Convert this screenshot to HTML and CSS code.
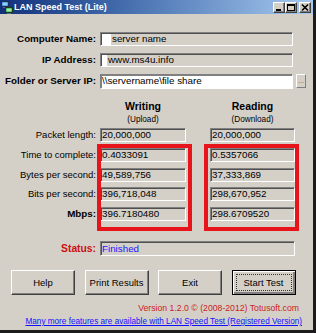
FILE: index.html
```html
<!DOCTYPE html>
<html>
<head>
<meta charset="utf-8">
<title>LAN Speed Test (Lite)</title>
<link rel="stylesheet" href="styles.css">
</head>
<body>
<div class="window">
  <div class="titlebar">
    <svg class="app-icon" width="12" height="13" viewBox="0 0 12 13">
      <rect x="0.5" y="0.5" width="7" height="5" fill="#3a78c8" stroke="#1b2f5a"/>
      <rect x="1.5" y="1.5" width="5" height="3" fill="#8fd0ff"/>
      <rect x="2" y="6" width="4" height="1" fill="#5a6a80"/>
      <rect x="4.5" y="6.5" width="7" height="5" fill="#2f9a4a" stroke="#1b3a22"/>
      <rect x="5.5" y="7.5" width="5" height="3" fill="#9ef0a8"/>
      <rect x="6" y="12" width="4" height="1" fill="#5a6a80"/>
    </svg>
    <span class="title">LAN Speed Test (Lite)</span>
    <div class="tb-buttons">
      <span class="tb-btn"><svg width="10" height="9" viewBox="0 0 10 9"><rect x="2" y="6" width="5" height="2" fill="#000"/></svg></span>
      <span class="tb-btn"><svg width="10" height="9" viewBox="0 0 10 9"><rect x="1.5" y="1.5" width="7" height="6" fill="none" stroke="#000"/><rect x="1" y="1" width="8" height="2" fill="#000"/></svg></span>
      <span class="tb-btn close-btn"><svg width="10" height="9" viewBox="0 0 10 9"><path d="M2 1.5 L8 7.5 M8 1.5 L2 7.5" stroke="#000" stroke-width="1.6"/></svg></span>
    </div>
  </div>

  <div class="main">
    <div class="fields">
      <div class="row">
        <span class="lbl bold">Computer Name:</span>
        <div class="box wide"><span class="hl w8"></span>server name</div>
      </div>
      <div class="row">
        <span class="lbl bold">IP Address:</span>
        <div class="box wide"><span class="hl w5"></span>www.ms4u.info</div>
      </div>
      <div class="row">
        <span class="lbl bold">Folder or Server IP:</span>
        <div class="box wide white">\\servername\file share</div>
        <span class="browse">...</span>
      </div>
    </div>

    <div class="heads">
      <div class="head"><span class="h-main">Writing</span><span class="h-sub">(Upload)</span></div>
      <div class="head right"><span class="h-main">Reading</span><span class="h-sub">(Download)</span></div>
    </div>

    <div class="results">
      <div class="row">
        <span class="lbl">Packet length:</span>
        <div class="box col-w">20,000,000</div>
        <div class="box col-r">20,000,000</div>
      </div>
      <div class="row first">
        <span class="lbl">Time to complete:</span>
        <div class="box col-w">0.4033091</div>
        <div class="box col-r">0.5357066</div>
      </div>
      <div class="row">
        <span class="lbl">Bytes per second:</span>
        <div class="box col-w">49,589,756</div>
        <div class="box col-r">37,333,869</div>
      </div>
      <div class="row">
        <span class="lbl">Bits per second:</span>
        <div class="box col-w">396,718,048</div>
        <div class="box col-r">298,670,952</div>
      </div>
      <div class="row">
        <span class="lbl bold">Mbps:</span>
        <div class="box col-w">396.7180480</div>
        <div class="box col-r">298.6709520</div>
      </div>
    </div>

    <div class="row status-row">
      <span class="lbl bold red">Status:</span>
      <div class="box status">Finished</div>
    </div>

    <div class="buttons">
      <span class="btn">Help</span>
      <span class="btn">Print Results</span>
      <span class="btn">Exit</span>
      <span class="btn default"><span class="focus">Start Test</span></span>
    </div>

    <p class="version">Version 1.2.0 &copy; (2008-2012) Totusoft.com</p>
    <a class="more" href="#">Many more features are available with LAN Speed Test (Registered Version)</a>
  </div>

  <div class="redbox rb-left"></div>
  <div class="redbox rb-right"></div>
</div>
</body>
</html>
```

FILE: styles.css
```css
* { box-sizing: border-box; }
html, body { margin: 0; padding: 0; }
body {
  width: 316px;
  height: 333px;
  overflow: hidden;
  background: #d4d0c8;
  font-family: "Liberation Sans", Arial, sans-serif;
  color: #000;
}
.window {
  position: relative;
  width: 316px;
  height: 333px;
  background: #d4d0c8;
  border-right: 3px solid #1c1c1c;
  border-bottom: 3px solid #1c1c1c;
}
.titlebar {
  height: 14px;
  display: flex;
  align-items: center;
  background: linear-gradient(to right, #12307a 0%, #3d66a8 35%, #a6caf0 100%);
}
.app-icon { margin-left: 1px; flex: none; }
.title {
  margin-left: 1px;
  color: #fff;
  font-weight: bold;
  font-size: 9px;
  line-height: 14px;
  white-space: nowrap;
}
.tb-buttons {
  margin-left: auto;
  display: flex;
  margin-right: 2px;
}
.tb-btn {
  width: 12px;
  height: 11px;
  display: flex;
  align-items: center;
  justify-content: center;
  background: #d4d0c8;
  border: 1px solid;
  border-color: #fff #404040 #404040 #fff;
  box-shadow: inset -1px -1px #808080;
}
.tb-btn svg { display: block; }
.close-btn { margin-left: 2px; }

.main { padding-top: 18px; }
.fields { display: flex; flex-direction: column; gap: 7px; }
.row {
  display: flex;
  align-items: center;
  height: 14px;
}
.lbl {
  width: 96px;
  margin-right: 4px;
  text-align: right;
  font-size: 9.5px;
  line-height: 14px;
  white-space: nowrap;
  flex: none;
}
.lbl.bold { font-weight: bold; font-size: 9.8px; }
.lbl.red { color: #cc1111; font-size: 10.3px; }

.box {
  height: 14px;
  display: flex;
  align-items: center;
  padding-left: 1px;
  font-size: 9.8px;
  line-height: 12px;
  white-space: nowrap;
  background: #d4d0c8;
  border: 1px solid;
  border-color: #808080 #fff #fff #808080;
  box-shadow: inset 1px 1px #505050;
  overflow: hidden;
  flex: none;
}
.box.wide { width: 193px; }
.box.white { background: #fff; height: 15px; box-shadow: inset 1px 1px #808080; }
.hl { display: inline-block; height: 11px; background: #fff; margin-right: 1px; }
.hl.w8 { width: 9px; }
.hl.w5 { width: 5px; }
.browse {
  width: 10px;
  height: 14px;
  margin-left: 3px;
  font-size: 7px;
  line-height: 12px;
  text-align: center;
  color: #606060;
  background: #d4d0c8;
  border: 1px solid;
  border-color: #fff #808080 #808080 #fff;
}

.heads {
  display: flex;
  margin-top: 12px;
  padding-left: 100px;
  height: 27px;
}
.head {
  width: 86px;
  display: flex;
  flex-direction: column;
  align-items: center;
}
.head.right { margin-left: 24px; width: 85px; }
.h-main { font-weight: bold; font-size: 10.5px; line-height: 13px; }
.h-sub { font-size: 8.2px; line-height: 13px; }

.results { margin-top: 1px; display: flex; flex-direction: column; gap: 5.5px; }
.results .row.first { margin-top: 0.5px; }
.col-w { width: 86px; }
.col-r { width: 85px; margin-left: 24px; }

.status-row { margin-top: 20.5px; height: 15px; }
.box.status { width: 195px; height: 15px; color: #1a1aff; font-size: 9.8px; }

.buttons {
  display: flex;
  gap: 9.5px;
  margin-top: 14px;
  padding-left: 11px;
}
.btn {
  width: 64px;
  height: 25px;
  display: flex;
  align-items: center;
  justify-content: center;
  font-size: 9.5px;
  background: #d4d0c8;
  border: 1px solid;
  border-color: #fff #404040 #404040 #fff;
  box-shadow: inset -1px -1px #808080;
  white-space: nowrap;
}
.btn.default {
  border: 1px solid #000;
  box-shadow: inset 1px 1px #fff, inset -2px -2px #808080;
  padding: 3px;
}
.focus {
  display: flex;
  align-items: center;
  justify-content: center;
  width: 100%;
  height: 100%;
  border: 1px dotted #333;
}

.version {
  margin: 7px 14px 0 0;
  text-align: right;
  font-size: 8.7px;
  line-height: 12px;
  color: #cc2222;
}
.more {
  display: block;
  margin: 2px 11px 0 0;
  text-align: right;
  font-size: 8.2px;
  line-height: 12px;
  color: #1010ff;
  text-decoration: underline;
  white-space: nowrap;
}

.redbox {
  position: absolute;
  top: 144px;
  height: 87px;
  border: 4px solid #e8141c;
}
.rb-left { left: 97px; width: 95px; }
.rb-right { left: 204px; width: 95px; }
```
